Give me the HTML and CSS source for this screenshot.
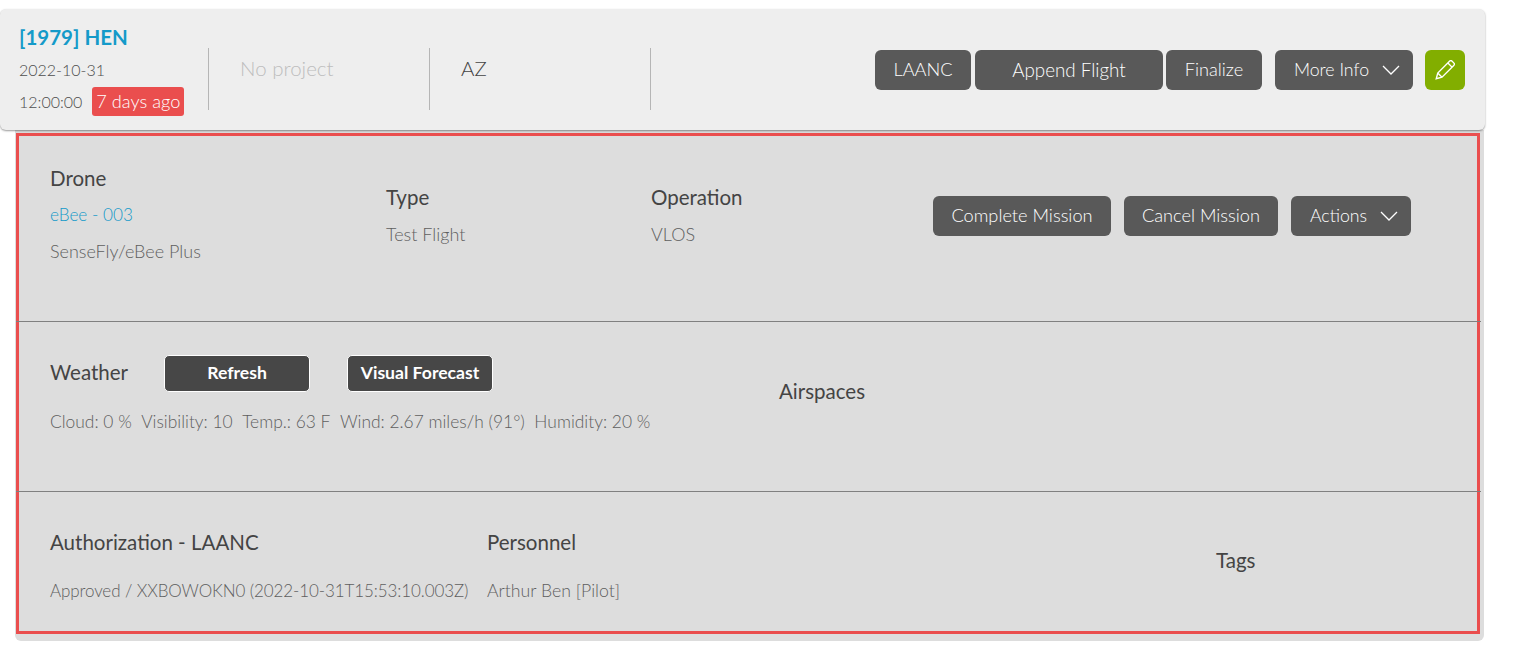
FILE: index.html
```html
<!DOCTYPE html>
<html lang="en">
<head>
  <meta charset="UTF-8">
  <title>Mission 1979</title>
  <link rel="stylesheet" href="styles.css">
</head>
<body>

<div class="mission">
  <div class="mission-head">
    <div class="head-col head-main">
      <a class="mission-name" href="#">[1979] HEN</a>
      <div class="mission-date">2022-10-31</div>
      <div class="mission-time">12:00:00 <span class="badge">7 days ago</span></div>
    </div>
    <div class="head-col head-cell muted-light">No project</div>
    <div class="head-col head-cell">AZ</div>
    <div class="head-buttons">
      <button class="btn btn-laanc">LAANC</button>
      <button class="btn btn-append">Append Flight</button>
      <button class="btn btn-finalize">Finalize</button>
      <button class="btn btn-more">More Info
        <svg class="chevron" viewBox="0 0 18 10"><path d="M1 1l8 8 8-8"/></svg>
      </button>
      <button class="btn btn-edit" aria-label="Edit">
        <svg viewBox="2 2 16 16"><path d="M3 17l1.200-4.600L13.600 3a1.500 1.500 0 0 1 2.100 0l1.300 1.300a1.500 1.500 0 0 1 0 2.100L7.600 15.800z M12.300 4.400l3.300 3.300 M4.200 12.400l3.400 3.400"/></svg>
      </button>
    </div>
  </div>

  <div class="mission-body">
    <div class="outlined">
      <div class="row row-drone">
        <div class="col-drone">
          <h4>Drone</h4>
          <a class="link" href="#">eBee - 003</a>
          <p>SenseFly/eBee Plus</p>
        </div>
        <div class="col-type">
          <h4>Type</h4>
          <p>Test Flight</p>
        </div>
        <div class="col-op">
          <h4>Operation</h4>
          <p>VLOS</p>
        </div>
        <div class="row-buttons">
          <button class="btn btn-complete">Complete Mission</button>
          <button class="btn btn-cancel">Cancel Mission</button>
          <button class="btn btn-actions">Actions
            <svg class="chevron" viewBox="0 0 18 10"><path d="M1 1l8 8 8-8"/></svg>
          </button>
        </div>
      </div>

      <div class="row row-weather">
        <div class="col-weather">
          <div class="weather-top">
            <h4>Weather</h4>
            <button class="btn-dark btn-refresh">Refresh</button>
            <button class="btn-dark btn-forecast">Visual Forecast</button>
          </div>
          <p class="weather-line">
            <span>Cloud: 0 %</span>
            <span>Visibility: 10</span>
            <span>Temp.: 63 F</span>
            <span>Wind: 2.67 miles/h (91°)</span>
            <span>Humidity: 20 %</span>
          </p>
        </div>
        <div class="col-airspaces">
          <h4>Airspaces</h4>
        </div>
      </div>

      <div class="row row-auth">
        <div class="col-auth">
          <h4>Authorization - LAANC</h4>
          <p>Approved / XXBOWOKN0 (2022-10-31T15:53:10.003Z)</p>
        </div>
        <div class="col-personnel">
          <h4>Personnel</h4>
          <p>Arthur Ben [Pilot]</p>
        </div>
        <div class="col-tags">
          <h4>Tags</h4>
        </div>
      </div>
    </div>
  </div>
</div>

</body>
</html>
```
FILE: styles.css
```css
* { box-sizing: border-box; margin: 0; padding: 0; }
body {
  font-family: Lato, "Open Sans", sans-serif;
  background: #fff;
  color: #444;
  padding-top: 9px;
  width: 1522px;
  height: 653px;
  overflow: hidden;
}
.mission { width: 1485px; }

/* head card */
.mission-head {
  display: flex;
  height: 121px;
  background: #eeeeee;
  border-radius: 6px;
  box-shadow: 0 1px 2px rgba(0,0,0,0.4);
  position: relative;
  z-index: 1;
  padding: 39px 20px 0 19px;
}
.head-col {
  height: 62px;
  border-right: 1px solid #b5b5b5;
}
.head-main { width: 190px; position: relative; }
.mission-name {
  position: absolute;
  top: -23px;
  left: 0;
  font-size: 20.500px;
  line-height: 24px;
  font-weight: 700;
  color: #149ac9;
  text-decoration: none;
  white-space: nowrap;
}
.mission-date { font-size: 16px; line-height: 20px; margin-top: 12px; color: #4d4d4d; font-weight: 300; }
.mission-time { font-size: 16px; margin-top: 7px; color: #4d4d4d; font-weight: 300; display: flex; align-items: center; gap: 10px; white-space: nowrap; }
.badge {
  background: #ea4e4e;
  color: #fff;
  font-size: 18.200px;
  height: 29px;
  line-height: 28px;
  padding: 0 4px;
  border-radius: 3px;
}
.head-cell {
  width: 221px;
  padding-left: 31px;
  font-size: 20.500px;
  font-weight: 300;
  line-height: 22px;
  padding-top: 9px;
}
.muted-light { color: #bdbdbd; }
.head-buttons {
  margin-left: auto;
  display: flex;
  margin-top: 2px;
  height: 40px;
}

.btn {
  height: 40px;
  background: #595959;
  color: #fff;
  border: none;
  border-radius: 6px;
  padding-bottom: 2px;
  font-family: inherit;
  font-size: 18.200px;
  font-weight: 300;
  display: flex;
  align-items: center;
  justify-content: center;
  white-space: nowrap;
}
.btn-laanc { width: 96px; margin-right: 4px; }
.btn-append { width: 188px; margin-right: 3px; font-size: 18.800px; }
.btn-finalize { width: 96px; margin-right: 13px; }
.btn-more { width: 138px; margin-right: 12px; font-size: 17.700px; padding-left: 6px; }
.btn-edit { width: 40px; background: #82ae00; padding-bottom: 0; }
.btn-edit svg { width: 20px; height: 20px; fill: none; stroke: #fff; stroke-width: 1.100; }
.chevron { width: 18px; height: 10px; margin-left: 13px; margin-top: 2px; fill: none; stroke: #fff; stroke-width: 1.300; }

/* details panel */
.mission-body {
  background: #dddddd;
  margin-left: 15px;
  margin-right: 1px;
  height: 511px;
  border-radius: 0 0 6px 6px;
  padding: 3px 3px 0 1px;
}
.outlined {
  height: 501px;
  border: 3px solid #ea4e4e;
  width: 1464px;
}
.row {
  display: flex;
  border-bottom: 1px solid #808080;
  margin-left: -3px;
  margin-right: -4px;
  padding-left: 34px;
}
.row h4 { font-size: 20.500px; font-weight: 400; line-height: 24px; color: #444; }
.row p, .link { font-size: 18px; font-weight: 300; color: #5f5f5f; line-height: 22px; }
.row .link { color: #149ac9; text-decoration: none; display: block; }

.row-drone { height: 186px; padding-top: 30px; }
.col-drone { width: 336px; }
.col-drone .link { margin-top: 14px; font-size: 17.200px; }
.col-drone p { margin-top: 14px; }
.col-type { width: 265px; padding-top: 19px; }
.col-op { width: 282px; padding-top: 19px; }
.col-type p, .col-op p { margin-top: 14px; }
.row-buttons { display: flex; margin-top: 30px; height: 40px; }
.btn-complete { width: 178px; margin-right: 13px; }
.btn-cancel { width: 154px; margin-right: 13px; }
.btn-actions { width: 120px; font-size: 17.700px; padding-left: 6px; }

.row-weather { height: 170px; padding-top: 33px; }
.col-weather { width: 729px; }
.weather-top { display: flex; align-items: center; height: 37px; }
.weather-top h4 { width: 114px; padding-bottom: 3px; }
.btn-dark {
  height: 37px;
  background: #474747;
  color: #fff;
  border: 1px solid #fff;
  border-radius: 5px;
  padding-bottom: 2px;
  font-family: inherit;
  font-size: 17.600px;
  font-weight: 700;
}
.btn-refresh { width: 146px; margin-right: 37px; }
.btn-forecast { width: 146px; }
.row .weather-line { margin-top: 19px; display: flex; gap: 9.500px; white-space: nowrap; font-size: 17.400px; }
.col-airspaces { padding-top: 24px; }

.row-auth { border-bottom: none; padding-top: 38px; }
.col-auth { width: 437px; }
.col-auth p, .col-personnel p { margin-top: 26px; white-space: nowrap; }
.row .col-auth p { font-size: 17px; letter-spacing: -0.100px; }
.row .col-personnel p { font-size: 17.700px; }
.col-personnel { width: 729px; }
.col-tags { padding-top: 18px; }
```
